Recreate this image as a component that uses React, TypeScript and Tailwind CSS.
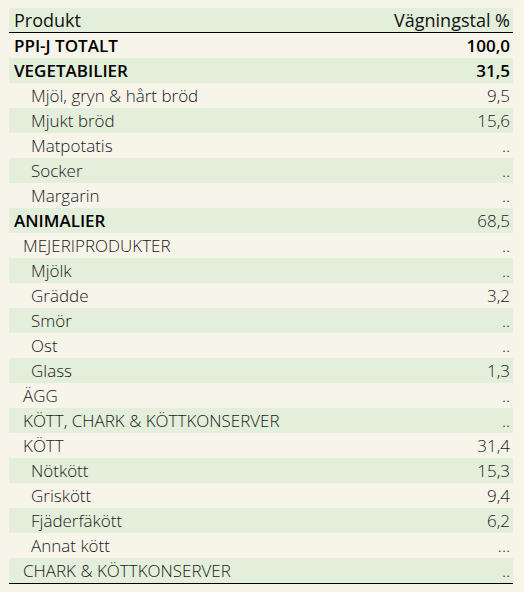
import React from 'react';

type Row = { name: string; value: string; level: 0 | 1 | 2; bold?: boolean; boldValue?: boolean };

const rows: Row[] = [
  { name: 'PPI-J TOTALT', value: '100,0', level: 0, bold: true, boldValue: true },
  { name: 'VEGETABILIER', value: '31,5', level: 0, bold: true, boldValue: true },
  { name: 'Mjöl, gryn & hårt bröd', value: '9,5', level: 2 },
  { name: 'Mjukt bröd', value: '15,6', level: 2 },
  { name: 'Matpotatis', value: '..', level: 2 },
  { name: 'Socker', value: '..', level: 2 },
  { name: 'Margarin', value: '..', level: 2 },
  { name: 'ANIMALIER', value: '68,5', level: 0, bold: true },
  { name: 'MEJERIPRODUKTER', value: '..', level: 1 },
  { name: 'Mjölk', value: '..', level: 2 },
  { name: 'Grädde', value: '3,2', level: 2 },
  { name: 'Smör', value: '..', level: 2 },
  { name: 'Ost', value: '..', level: 2 },
  { name: 'Glass', value: '1,3', level: 2 },
  { name: 'ÄGG', value: '..', level: 1 },
  { name: 'KÖTT, CHARK & KÖTTKONSERVER', value: '..', level: 1 },
  { name: 'KÖTT', value: '31,4', level: 1 },
  { name: 'Nötkött', value: '15,3', level: 2 },
  { name: 'Griskött', value: '9,4', level: 2 },
  { name: 'Fjäderfäkött', value: '6,2', level: 2 },
  { name: 'Annat kött', value: '...', level: 2 },
  { name: 'CHARK & KÖTTKONSERVER', value: '..', level: 1 },
];

const indent = ['pl-[5px]', 'pl-[14px]', 'pl-[22px]'];

export default function App() {
  return (
    <div className="min-h-[592px] bg-[#f7f5ea] pt-[8px] pl-[9px] pr-[11px] font-['Open_Sans',sans-serif] text-[17px] leading-none">
      <div className="flex flex-col border-b border-black">
        {/* header */}
        <div className="h-[25px] flex items-center justify-between bg-[#e3eedb] border-b border-black pl-[5px] pr-[3px] text-[18px] text-[#111]">
          <span>Produkt</span>
          <span>Vägningstal %</span>
        </div>
        {rows.map((r, i) => (
          <div
            key={i}
            className={`h-[25px] flex items-center justify-between pr-[3px] ${indent[r.level]} ${i % 2 === 1 ? 'bg-[#e3eedb]' : ''}`}
          >
            <span className={r.bold ? 'font-semibold text-black' : 'font-light text-[#1a1a1a]'}>{r.name}</span>
            <span className={r.boldValue ? 'font-semibold text-black' : 'font-light text-[#1a1a1a]'}>{r.value}</span>
          </div>
        ))}
      </div>
    </div>
  );
}
